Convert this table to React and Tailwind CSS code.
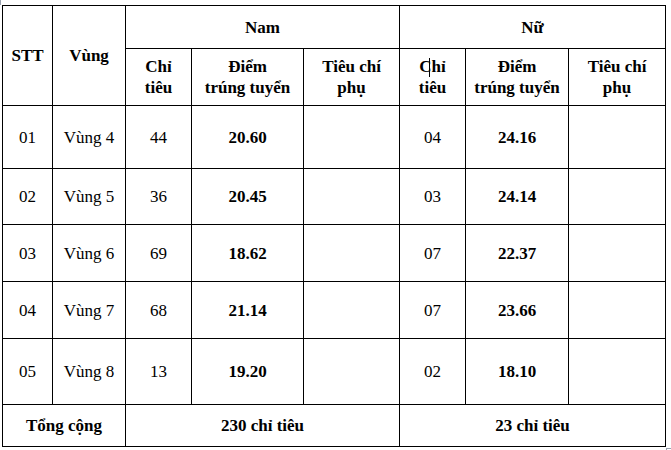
import React from "react";

const rows = [
  { stt: "01", vung: "Vùng 4", namCt: "44", namDiem: "20.60", nuCt: "04", nuDiem: "24.16", h: "h-[63px]" },
  { stt: "02", vung: "Vùng 5", namCt: "36", namDiem: "20.45", nuCt: "03", nuDiem: "24.14", h: "h-[56px]" },
  { stt: "03", vung: "Vùng 6", namCt: "69", namDiem: "18.62", nuCt: "07", nuDiem: "22.37", h: "h-[57px]" },
  { stt: "04", vung: "Vùng 7", namCt: "68", namDiem: "21.14", nuCt: "07", nuDiem: "23.66", h: "h-[57px]" },
  { stt: "05", vung: "Vùng 8", namCt: "13", namDiem: "19.20", nuCt: "02", nuDiem: "18.10", h: "h-[66px]" },
];

const cell = "border border-black text-center align-middle p-0";

export default function App() {
  return (
    <div className="relative min-h-[450px] w-[671px] bg-white pl-[2px] pt-[5px] font-['Liberation_Serif','Times_New_Roman',serif] text-[17px] leading-[21px] text-black">
      <div className="absolute left-0 top-0 h-[5px] w-[1px] bg-gray-400" />
      <div className="absolute left-[666px] top-[448px] h-[1px] w-[5px] bg-gray-400" />
      <div className="absolute left-[666px] top-[448px] h-[2px] w-[1px] bg-gray-400" />

      <table className="w-[663px] table-fixed border-collapse">
        <colgroup>
          <col className="w-[50px]" />
          <col className="w-[73px]" />
          <col className="w-[66px]" />
          <col className="w-[112px]" />
          <col className="w-[96px]" />
          <col className="w-[66px]" />
          <col className="w-[103px]" />
          <col className="w-[97px]" />
        </colgroup>
        <thead className="font-bold">
          <tr className="h-[43px]">
            <th rowSpan={2} className={cell}>STT</th>
            <th rowSpan={2} className={cell}>Vùng</th>
            <th colSpan={3} className={cell}>Nam</th>
            <th colSpan={3} className={cell}>Nữ</th>
          </tr>
          <tr className="h-[57px]">
            <th className={cell}>Chỉ<br />tiêu</th>
            <th className={cell}>Điểm<br />trúng tuyển</th>
            <th className={cell}>Tiêu chí<br />phụ</th>
            <th className={cell}>
              <span className="relative">
                Chỉ
                <span className="absolute left-[10px] top-[1px] h-[19px] w-[1px] bg-black" />
              </span>
              <br />tiêu
            </th>
            <th className={cell}>Điểm<br />trúng tuyển</th>
            <th className={cell}>Tiêu chí<br />phụ</th>
          </tr>
        </thead>
        <tbody>
          {rows.map((r) => (
            <tr key={r.stt} className={r.h}>
              <td className={cell}>{r.stt}</td>
              <td className={cell}>{r.vung}</td>
              <td className={cell}>{r.namCt}</td>
              <td className={`${cell} font-bold`}>{r.namDiem}</td>
              <td className={cell}></td>
              <td className={cell}>{r.nuCt}</td>
              <td className={`${cell} font-bold`}>{r.nuDiem}</td>
              <td className={cell}></td>
            </tr>
          ))}
          <tr className="h-[42px] font-bold">
            <td colSpan={2} className={cell}>Tổng cộng</td>
            <td colSpan={3} className={cell}>230 chỉ tiêu</td>
            <td colSpan={3} className={cell}>23 chỉ tiêu</td>
          </tr>
        </tbody>
      </table>
    </div>
  );
}
